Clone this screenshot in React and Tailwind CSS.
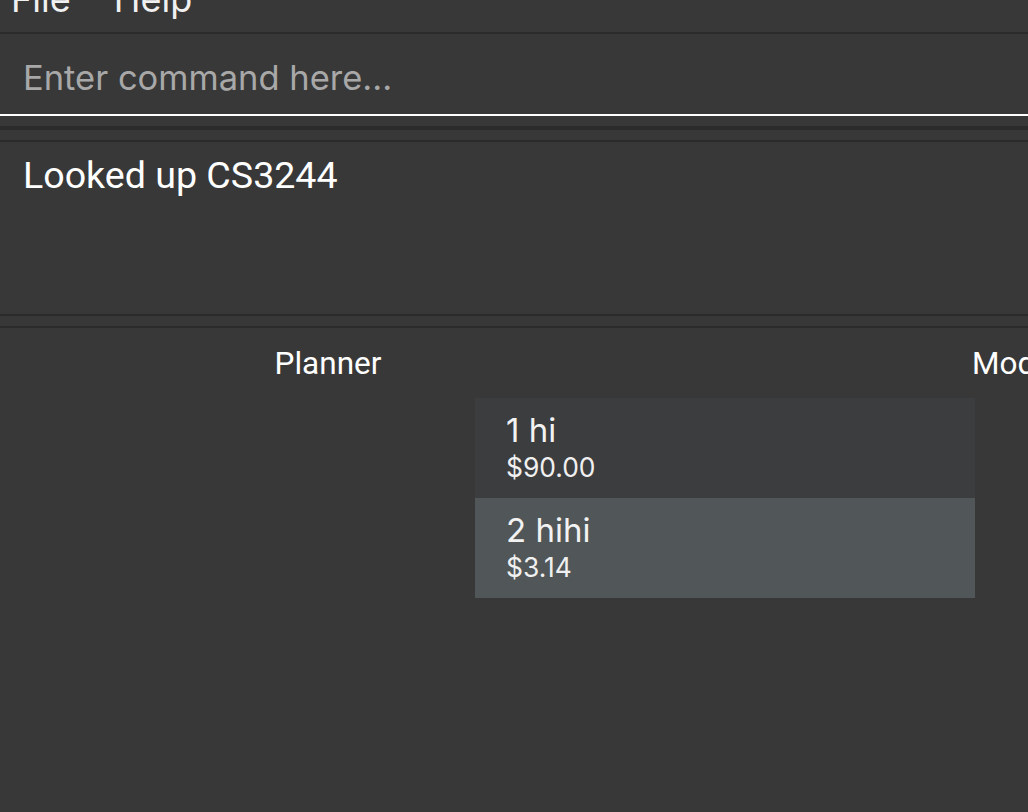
export default function App() {
  return (
    <div className="w-[1028px] h-[812px] overflow-hidden bg-[#383838] text-white" style={{ fontFamily: 'Inter, "Noto Sans", sans-serif' }}>
      {/* menu bar */}
      <div className="h-[32px] overflow-hidden">
        <div className="flex gap-[43px] pl-[11px] text-[36px] leading-none text-[#f0f0f0] -mt-[19px]">
          <span>File</span>
          <span>Help</span>
        </div>
      </div>
      <div className="h-[2px] bg-[#2b2b2b]" />
      {/* command box */}
      <div className="h-[80px] px-[23px] pt-[27px] text-[34.5px] leading-none text-[#a8a8a8] whitespace-nowrap">
        Enter command here...
      </div>
      <div className="h-[2px] bg-white" />
      <div className="h-[10px]" />
      <div className="h-[4px] bg-[#2b2b2b]" />
      <div className="h-[10px]" />
      <div className="h-[2px] bg-[#2b2b2b]" />
      {/* result display */}
      <div className="h-[172px] px-[23px] pt-[15px] text-[37.6px] leading-none text-white" style={{ fontFamily: 'Roboto, sans-serif' }}>
        Looked up CS3244
      </div>
      <div className="h-[2px] bg-[#2b2b2b]" />
      <div className="h-[10px]" />
      <div className="h-[2px] bg-[#2b2b2b]" />
      {/* main */}
      <div className="flex h-[70px] pt-[20px] text-[31.5px] leading-none whitespace-nowrap" style={{ fontFamily: 'Roboto, sans-serif' }}>
        <div className="w-[656px] shrink-0 text-center">Planner</div>
        <div className="ml-[316px] shrink-0">Modules</div>
      </div>
      <div className="ml-[475px] w-[500px]">
        <div className="h-[100px] bg-[#3c3d3f] pl-[31px] pt-[16px]">
          <div className="text-[33px] leading-none text-[#f2f2f2]">1 hi</div>
          <div className="mt-[7px] text-[26.4px] leading-none text-[#f0f0f0]">$90.00</div>
        </div>
        <div className="h-[100px] bg-[#515658] pl-[31px] pt-[16px]">
          <div className="text-[33px] leading-none text-[#f2f2f2]">2 hihi</div>
          <div className="mt-[7px] text-[26.4px] leading-none text-[#f0f0f0]">$3.14</div>
        </div>
      </div>
    </div>
  );
}
